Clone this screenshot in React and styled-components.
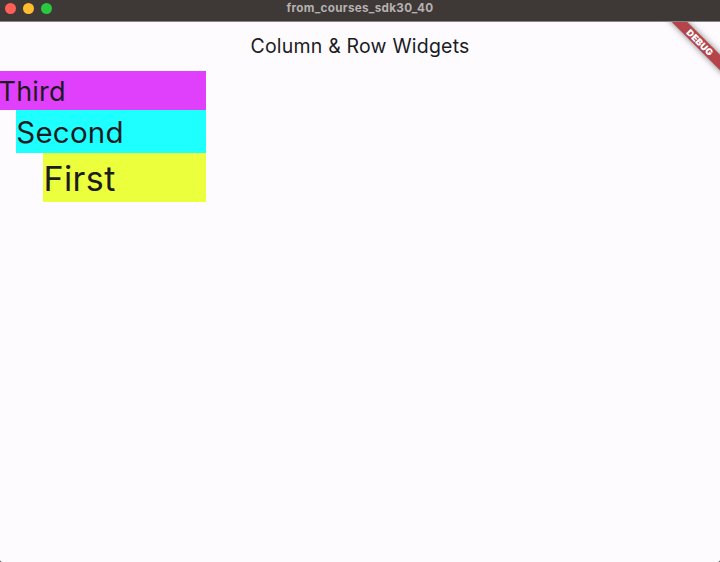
import React from "react";
import styled, { createGlobalStyle } from "styled-components";

const GlobalStyle = createGlobalStyle`
  * { box-sizing: border-box; }
  html, body { margin: 0; background: #2b2626; overflow: hidden; }
`;

const Window = styled.div`
  position: relative;
  display: flex;
  flex-direction: column;
  width: 720px;
  height: 562px;
  overflow: hidden;
  border-radius: 0 0 2px 2px;
  background: #fefbff;
  color: #1c1b1f;
  font-family: Inter, "Liberation Sans", sans-serif;
`;

const TitleBar = styled.header`
  display: grid;
  grid-template-columns: 1fr auto 1fr;
  height: 22px;
  flex: none;
  background: #3e3836;
  border-bottom: 1px solid #878381;
`;

const Controls = styled.div`
  display: flex;
  gap: 7px;
  padding: 2.5px 0 0 5.4px;
`;

const Light = styled.span`
  width: 11px;
  height: 11px;
  border-radius: 50%;
  background: ${(p) => p.$color};
`;

const WindowTitle = styled.span`
  font-size: 11.7px;
  font-weight: 700;
  line-height: 16px;
  letter-spacing: 0.3px;
  color: #b6b2b1;
`;

const AppBar = styled.div`
  display: flex;
  flex: none;
  align-items: center;
  justify-content: center;
  height: 49px;
  padding-bottom: 1px;
`;

const AppTitle = styled.h1`
  margin: 0;
  font-size: 19.5px;
  font-weight: 400;
  line-height: 28px;
  letter-spacing: 0.2px;
`;

const Column = styled.main`
  display: flex;
  flex-direction: column;
  align-items: flex-end;
  width: 206px;
`;

const Label = styled.div`
  width: ${(p) => p.$width}px;
  height: ${(p) => p.$height}px;
  background: ${(p) => p.$color};
  font-size: ${(p) => p.$size}px;
  line-height: ${(p) => p.$height + 2}px;
  letter-spacing: ${(p) => p.$spacing}px;
  text-indent: ${(p) => p.$indent || 0}px;
  white-space: nowrap;
`;

const BannerArea = styled.div`
  position: absolute;
  top: 22px;
  right: 0;
  width: 60px;
  height: 60px;
  overflow: hidden;
`;

const Banner = styled.div`
  position: absolute;
  top: 14.5px;
  left: 0;
  width: 80px;
  height: 11px;
  transform: rotate(45deg);
  background: #b4444a;
  box-shadow: 0 0 6px rgba(0, 0, 0, 0.5);
  color: #fff;
  font-size: 9.2px;
  font-weight: 900;
  line-height: 11px;
  letter-spacing: 0.2px;
  text-align: center;
`;

export default function App() {
  return (
    <>
      <GlobalStyle />
      <Window>
        <TitleBar>
          <Controls>
            <Light $color="#ff5f57" />
            <Light $color="#febc2e" />
            <Light $color="#28c840" />
          </Controls>
          <WindowTitle>from_courses_sdk30_40</WindowTitle>
        </TitleBar>
        <AppBar>
          <AppTitle>Column &amp; Row Widgets</AppTitle>
        </AppBar>
        <Column>
          <Label $color="#e040fb" $width={206} $height={39} $size={27} $spacing={0.2} $indent={-1.5}>Third</Label>
          <Label $color="#1effff" $width={190} $height={43} $size={29.5} $spacing={0.2} $indent={0.3}>Second</Label>
          <Label $color="#ebff3d" $width={163} $height={49} $size={34} $spacing={0.4} $indent={0.5}>First</Label>
        </Column>
        <BannerArea>
          <Banner>DEBUG</Banner>
        </BannerArea>
      </Window>
    </>
  );
}
